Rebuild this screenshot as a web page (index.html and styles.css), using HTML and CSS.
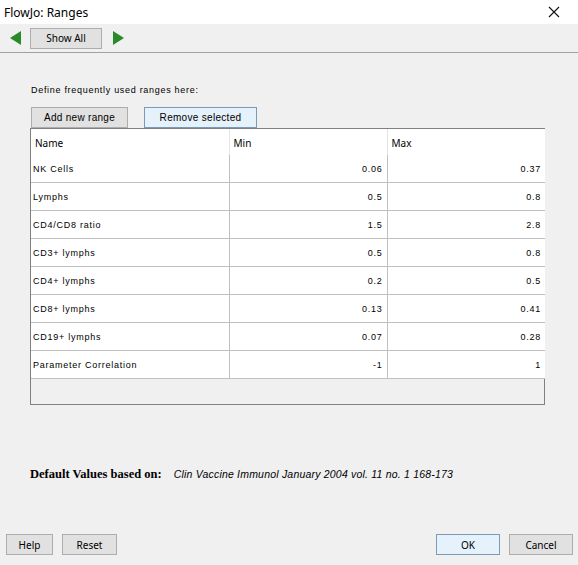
FILE: index.html
```html
<!DOCTYPE html>
<html lang="en">
<head>
    <meta charset="UTF-8">
    <title>FlowJo: Ranges</title>
    <link rel="stylesheet" href="styles.css">
</head>
<body>
    <div class="window">
        <div class="titlebar">
            <span class="title">FlowJo: Ranges</span>
            <svg class="close" width="12" height="12" viewBox="0 0 12 12">
                <path d="M1 1 L11 11 M11 1 L1 11" stroke="#111" stroke-width="1.1" fill="none"/>
            </svg>
        </div>
        <div class="toolbar">
            <svg class="arrow" width="11" height="14" viewBox="0 0 11 14">
                <polygon points="11,0 11,14 0,7" fill="#2a8a2a"/>
            </svg>
            <button class="btn showall">Show All</button>
            <svg class="arrow" width="11" height="14" viewBox="0 0 11 14">
                <polygon points="0,0 0,14 11,7" fill="#2a8a2a"/>
            </svg>
        </div>

        <div class="content">
            <div class="intro">Define frequently used ranges here:</div>
            <div class="actions">
                <button class="btn small">Add new range</button>
                <button class="btn small focus">Remove selected</button>
            </div>
            <div class="grid">
                <table>
                    <colgroup>
                        <col class="cname">
                        <col class="cnum">
                        <col class="cnum">
                    </colgroup>
                    <thead>
                        <tr><th>Name</th><th>Min</th><th>Max</th></tr>
                    </thead>
                    <tbody>
                        <tr><td>NK Cells</td><td class="num">0.06</td><td class="num">0.37</td></tr>
                        <tr><td>Lymphs</td><td class="num">0.5</td><td class="num">0.8</td></tr>
                        <tr><td>CD4/CD8 ratio</td><td class="num">1.5</td><td class="num">2.8</td></tr>
                        <tr><td>CD3+ lymphs</td><td class="num">0.5</td><td class="num">0.8</td></tr>
                        <tr><td>CD4+ lymphs</td><td class="num">0.2</td><td class="num">0.5</td></tr>
                        <tr><td>CD8+ lymphs</td><td class="num">0.13</td><td class="num">0.41</td></tr>
                        <tr><td>CD19+ lymphs</td><td class="num">0.07</td><td class="num">0.28</td></tr>
                        <tr><td>Parameter Correlation</td><td class="num">-1</td><td class="num">1</td></tr>
                    </tbody>
                </table>
            </div>
            <div class="source">
                <b>Default Values based on:</b>
                <i>Clin Vaccine Immunol January 2004 vol. 11 no. 1 168-173</i>
            </div>
        </div>

        <div class="footer">
            <div class="group">
                <button class="btn foot">Help</button>
                <button class="btn foot">Reset</button>
            </div>
            <div class="group">
                <button class="btn foot focus">OK</button>
                <button class="btn foot">Cancel</button>
            </div>
        </div>
    </div>
</body>
</html>
```

FILE: styles.css
```css
body {
    margin: 0;
    background: #f0f0f0;
}

.window {
    width: 578px;
    height: 565px;
    display: flex;
    flex-direction: column;
    font-family: "Noto Sans", "Liberation Sans", sans-serif;
    color: #000;
}

.titlebar {
    height: 24px;
    background: #fff;
    display: flex;
    align-items: center;
    justify-content: space-between;
    padding: 0 18px 0 4px;
}

.title {
    font-size: 12px;
}

.toolbar {
    height: 28px;
    border-bottom: 1px solid #a0a0a0;
    display: flex;
    align-items: center;
    padding-left: 10px;
}

.arrow {
    display: block;
}

.btn {
    font-family: "Liberation Sans", sans-serif;
    font-size: 10px;
    background: #e1e1e1;
    border: 1px solid #adadad;
    padding: 0;
    color: #000;
}

.showall {
    width: 72px;
    height: 21px;
    margin: 0 11px 0 9px;
    font-family: "Noto Sans", sans-serif;
    font-size: 10px;
}

.content {
    flex: 1;
    padding: 30px 33px 0 30px;
}

.intro {
    font-family: "Liberation Sans", sans-serif;
    font-size: 9px;
    letter-spacing: 0.7px;
    line-height: 14px;
    padding-left: 1px;
}

.actions {
    display: flex;
    gap: 16px;
    margin-top: 10px;
    padding-left: 1px;
}

.small {
    height: 21px;
    letter-spacing: 0.3px;
}

.actions .small:first-child {
    width: 97px;
}

.actions .small:last-child {
    width: 113px;
}

.focus {
    background: #e5f1fb;
    border-color: #7a9ab8;
}

.grid {
    height: 275px;
    border: 1px solid #808080;
    background: #f0f0f0;
}

table {
    width: 514px;
    border-collapse: collapse;
    table-layout: fixed;
    background: #fff;
}

.cname {
    width: 198px;
}

.cnum {
    width: 158px;
}

th {
    height: 24px;
    padding: 2px 4px 0;
    font-family: "Noto Sans", sans-serif;
    font-weight: normal;
    font-size: 10px;
    text-align: left;
    border-left: 1px solid #e4e4e4;
}

th:first-child {
    border-left: none;
}

td {
    height: 27px;
    font-family: "Liberation Sans", sans-serif;
    font-size: 9px;
    letter-spacing: 0.75px;
    padding: 0 2px;
    border-left: 1px solid #c0c0c0;
    border-bottom: 1px solid #c0c0c0;
}

td:first-child {
    border-left: none;
}

td.num {
    text-align: right;
    padding-right: 4px;
}

.source {
    margin-top: 62px;
    display: flex;
    align-items: baseline;
    gap: 12px;
}

.source b {
    font-family: "Liberation Serif", serif;
    font-size: 12.5px;
}

.source i {
    font-family: "Liberation Sans", sans-serif;
    font-size: 10.5px;
    letter-spacing: 0.2px;
}

.footer {
    height: 26px;
    display: flex;
    justify-content: space-between;
    padding: 0 5px 5px 6px;
}

.group {
    display: flex;
    gap: 9px;
}

.foot {
    height: 21px;
    width: 64px;
    font-family: "Noto Sans", sans-serif;
    font-size: 10px;
}

.group:first-child .foot:first-child {
    width: 47px;
}

.group:first-child .foot:last-child {
    width: 55px;
}
```
